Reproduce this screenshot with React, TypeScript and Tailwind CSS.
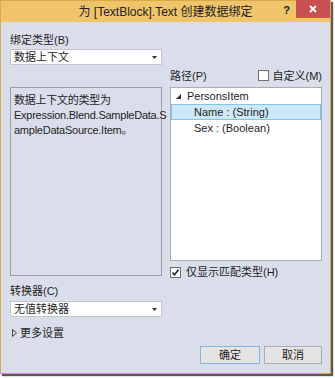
const font = { fontFamily: '"Liberation Sans", "Noto Sans CJK SC", sans-serif' };

function Combo({ value }: { value: string }) {
  return (
    <div className="flex h-[16px] w-[152px] items-center justify-between border border-[#c3c6cc] bg-white pl-[3px] pr-[4px]">
      <span className="text-[11px] leading-none text-[#1e1e1e]">{value}</span>
      <svg width="5" height="3" viewBox="0 0 5 3">
        <path d="M0 0h5L2.5 3z" fill="#333" />
      </svg>
    </div>
  );
}

function Check({ checked }: { checked?: boolean }) {
  return (
    <div className="flex h-[11px] w-[11px] items-center justify-center border border-[#707070] bg-white">
      {checked && (
        <svg width="9" height="9" viewBox="0 0 9 9">
          <path d="M1.5 4.5l2 2.2 4-5" stroke="#222" strokeWidth="1.6" fill="none" />
        </svg>
      )}
    </div>
  );
}

export default function App() {
  return (
    <div className="h-[378px] w-[335px] bg-white" style={font}>
      <div className="flex h-[374px] w-[331px] flex-col border border-[#d9aa4c] bg-[#d9deea] shadow-[2px_2px_1px_rgba(60,60,60,0.85)]">
        {/* title bar */}
        <div className="relative flex h-[21px] shrink-0 items-center justify-center bg-[#f0c46a]">
          <span className="text-[12px] text-[#222]">为 [TextBlock].Text 创建数据绑定</span>
          <span className="absolute right-[40px] top-[1px] text-[11px] font-bold text-[#222]">?</span>
          <div className="absolute right-0 top-[-1px] flex h-[18px] w-[34px] items-center justify-center bg-[#c75050]">
            <svg width="8" height="8" viewBox="0 0 8 8">
              <path d="M1 1l6 6M7 1L1 7" stroke="#fff" strokeWidth="1.8" />
            </svg>
          </div>
        </div>

        <div className="flex flex-1 flex-col pl-[9px] pr-[8px] text-[11px] text-[#1e1e1e]">
          <div className="mt-[12px] leading-[12px]">绑定类型(B)</div>
          <div className="mt-[3px]">
            <Combo value="数据上下文" />
          </div>

          <div className="mt-[5px] flex gap-[8px]">
            {/* left column */}
            <div className="flex w-[152px] flex-col">
              <div className="mt-[17px] h-[189px] whitespace-nowrap border border-[#9c9fa7] px-[3px] pt-[5px] text-[11px] leading-[15px] tracking-[-0.25px]">
                数据上下文的类型为
                <br />
                Expression.Blend.SampleData.S
                <br />
                ampleDataSource.Item。
              </div>
              <div className="mt-[9px] leading-[12px]">转换器(C)</div>
              <div className="mt-[4px]">
                <Combo value="无值转换器" />
              </div>
              <div className="mt-[10px] flex items-center gap-[3px] pl-[2px]">
                <svg width="5" height="8" viewBox="0 0 5 8">
                  <path d="M0.5 0.5L4.5 4L0.5 7.5z" stroke="#444" fill="none" />
                </svg>
                <span className="leading-[12px]">更多设置</span>
              </div>
            </div>

            {/* right column */}
            <div className="flex w-[152px] flex-col">
              <div className="flex h-[11px] items-center justify-between">
                <span className="leading-[12px]">路径(P)</span>
                <div className="flex items-center gap-[4px]">
                  <Check />
                  <span className="leading-[12px]">自定义(M)</span>
                </div>
              </div>
              <div className="mt-[6px] h-[174px] border border-[#a9adb5] bg-white">
                <div className="flex h-[16px] items-center pl-[5px]">
                  <svg width="5" height="5" viewBox="0 0 5 5" className="mr-[6px]">
                    <path d="M5 0V5H0z" fill="#333" />
                  </svg>
                  <span className="leading-[12px]">PersonsItem</span>
                </div>
                <div className="flex h-[16px] items-center border border-[#84c5ec] bg-[#cde8f8] pl-[22px]">
                  <span className="leading-[12px]">Name : (String)</span>
                </div>
                <div className="flex h-[16px] items-center pl-[23px]">
                  <span className="leading-[12px]">Sex : (Boolean)</span>
                </div>
              </div>
              <div className="mt-[5px] flex items-center gap-[5px]">
                <Check checked />
                <span className="leading-[12px]">仅显示匹配类型(H)</span>
              </div>
            </div>
          </div>

          <div className="mt-auto mb-[9px] flex justify-end gap-[4px]">
            <div className="flex h-[18px] w-[60px] items-center justify-center border border-[#7eb6e8] bg-[#e4e4e4]">
              确定
            </div>
            <div className="flex h-[18px] w-[58px] items-center justify-center border border-[#adadad] bg-[#e4e4e4]">
              取消
            </div>
          </div>
        </div>
      </div>
    </div>
  );
}
